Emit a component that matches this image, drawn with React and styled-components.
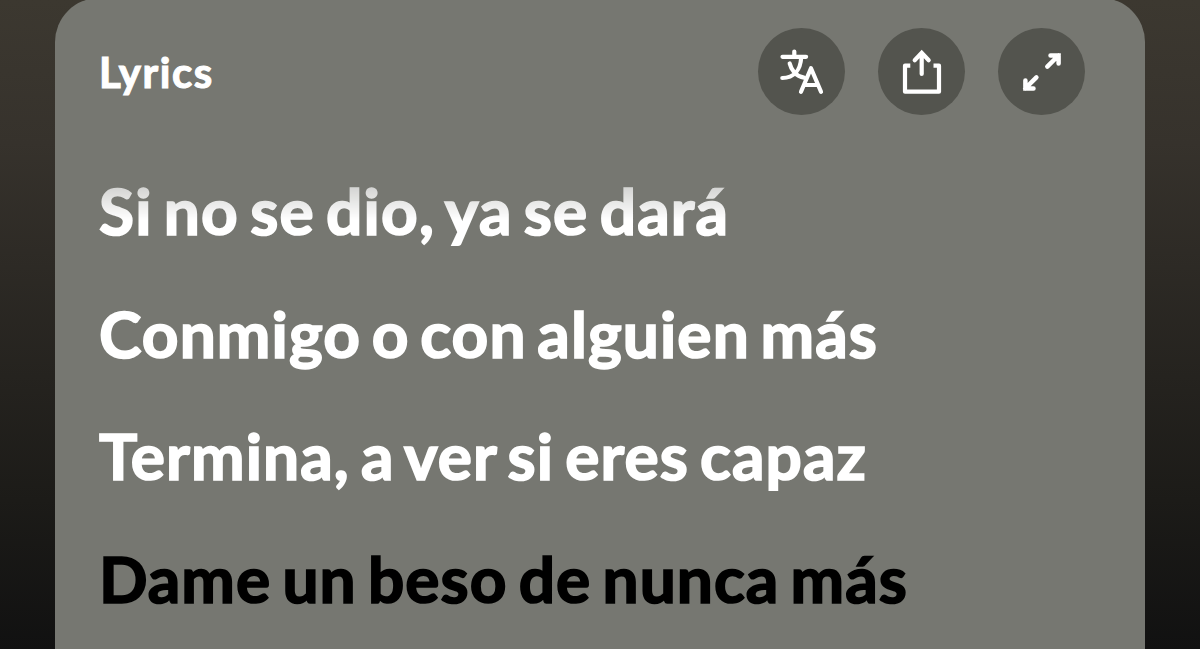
import React from 'react';
import styled, { createGlobalStyle } from 'styled-components';

const GlobalStyle = createGlobalStyle`
  * {
    box-sizing: border-box;
  }

  body {
    margin: 0;
    overflow: hidden;
  }
`;

const Page = styled.main`
  width: 100%;
  height: 100vh;
  padding: 0 55px;
  overflow: hidden;
  background: linear-gradient(#3c3830 0%, #36322c 22%, #1c1b18 77%, #111111 100%);
  font-family: Lato, 'Noto Sans', sans-serif;
`;

const Card = styled.section`
  height: 720px;
  margin-top: -2px;
  padding: 30px 60px 0 44px;
  border-radius: 44px;
  background: #767771;
`;

const Header = styled.header`
  height: 87px;
  display: flex;
  align-items: center;
  justify-content: space-between;
`;

const Title = styled.h2`
  margin: 0;
  color: #ffffff;
  font-size: 42px;
  font-weight: 700;
  line-height: 52px;
  letter-spacing: 1.6px;
  -webkit-text-stroke: 1.1px currentColor;
`;

const Actions = styled.div`
  display: flex;
  gap: 33px;
`;

const ActionButton = styled.button`
  width: 87px;
  height: 87px;
  padding: 0;
  border: 0;
  border-radius: 50%;
  background: #53544e;
  color: #ffffff;

  svg {
    display: block;
    fill: none;
    stroke: currentColor;
    stroke-width: ${props => props.$stroke || 4.2};
    stroke-linecap: round;
  }
`;

const Lyrics = styled.div`
  margin-top: 35px;
  mask-image: linear-gradient(rgba(0, 0, 0, 0.5) 18px, #000 70px);
`;

const Line = styled.p`
  margin: 0;
  color: ${props => (props.$next ? '#000000' : '#ffffff')};
  font-size: 64px;
  font-weight: 700;
  line-height: 122.7px;
  letter-spacing: ${props => props.$spacing}px;
  word-spacing: ${props => props.$gap}px;
  white-space: nowrap;
  -webkit-text-stroke: 1.7px currentColor;
`;

const lines = [
  { text: 'Si no se dio, ya se dará', spacing: 1.2, gap: -5.6 },
  { text: 'Conmigo o con alguien más', spacing: 1.1, gap: -6 },
  { text: 'Termina, a ver si eres capaz', spacing: 1.1, gap: -5.7 },
  { text: 'Dame un beso de nunca más', spacing: 1, gap: -5.2, next: true },
];

const TranslateIcon = () => (
  <svg width="87" height="87" viewBox="0 0 87 87">
    <path d="M36.3 23.5v5M24.5 28.8h23.6M43.2 29.5C42.5 42 36 50 24.3 50M31.7 35.5C33.2 42 38 48.5 46 49.7" />
    <path d="M43 63.8L53 40.3L63 63.8M46.5 57h13" strokeLinejoin="round" />
  </svg>
);

const ShareIcon = () => (
  <svg width="87" height="87" viewBox="0 0 87 87">
    <path d="M32.3 37.7H27v26h34v-26h-5.5" strokeLinejoin="round" strokeLinecap="butt" />
    <path d="M43.7 46V25M36.7 32.3l7-7.4 7 7.4" />
  </svg>
);

const ExpandIcon = () => (
  <svg width="87" height="87" viewBox="0 0 87 87">
    <path d="M49.3 38.7L60.5 27.5M52.5 27.4h8.1v8.1M38.4 49.3L27.2 60.5M27.4 52.5v8.1h8.1" />
  </svg>
);

const App = () => (
  <>
    <GlobalStyle />
    <Page>
      <Card>
        <Header>
          <Title>Lyrics</Title>
          <Actions>
            <ActionButton aria-label="Translate">
              <TranslateIcon />
            </ActionButton>
            <ActionButton aria-label="Share">
              <ShareIcon />
            </ActionButton>
            <ActionButton aria-label="Expand" $stroke={4.5}>
              <ExpandIcon />
            </ActionButton>
          </Actions>
        </Header>
        <Lyrics>
          {lines.map(line => (
            <Line
              key={line.text}
              $spacing={line.spacing}
              $gap={line.gap}
              $next={line.next}
            >
              {line.text}
            </Line>
          ))}
        </Lyrics>
      </Card>
    </Page>
  </>
);

export default App;
